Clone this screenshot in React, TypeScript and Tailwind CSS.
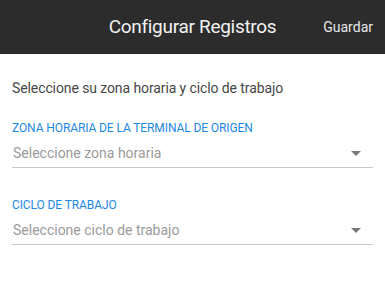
import React from "react";

function Caret() {
  return (
    <svg width="10" height="5" viewBox="0 0 10 5" className="mr-[12px] shrink-0">
      <path d="M0 0h10L5 5z" fill="#7a7a7a" />
    </svg>
  );
}

function Field({ label, placeholder, className }: { label: string; placeholder: string; className?: string }) {
  return (
    <div className={className}>
      <div className="text-[12px] leading-[16px] tracking-[-0.1px] text-[#1e88e5]">{label}</div>
      <div className="mt-[7px] flex h-[25px] items-start justify-between border-b border-[#c8c8c8] pb-[4px]">
        <span className="pl-[1px] text-[14px] leading-[20px] text-[#9a9a9a]">{placeholder}</span>
        <div className="flex h-[20px] items-center">
          <Caret />
        </div>
      </div>
    </div>
  );
}

export default function App() {
  return (
    <div className="h-[286px] w-[385px] bg-white" style={{ fontFamily: "Roboto, 'Noto Sans', sans-serif" }}>
      <header className="grid h-[54px] grid-cols-[1fr_auto_1fr] items-center bg-[#2c2c2c] px-3">
        <div />
        <h1 className="text-[19px] font-normal leading-[28px] tracking-[-0.3px] text-[#f2f2f2]">Configurar Registros</h1>
        <button className="justify-self-end text-[14px] leading-[20px] text-[#e8e8e8]">Guardar</button>
      </header>
      <main className="px-3 pt-[24px]">
        <p className="text-[14px] leading-[20px] tracking-[-0.1px] text-[#474747]">Seleccione su zona horaria y ciclo de trabajo</p>
        <Field className="mt-[22px]" label="ZONA HORARIA DE LA TERMINAL DE ORIGEN" placeholder="Seleccione zona horaria" />
        <Field className="mt-[29px]" label="CICLO DE TRABAJO" placeholder="Seleccione ciclo de trabajo" />
      </main>
    </div>
  );
}
